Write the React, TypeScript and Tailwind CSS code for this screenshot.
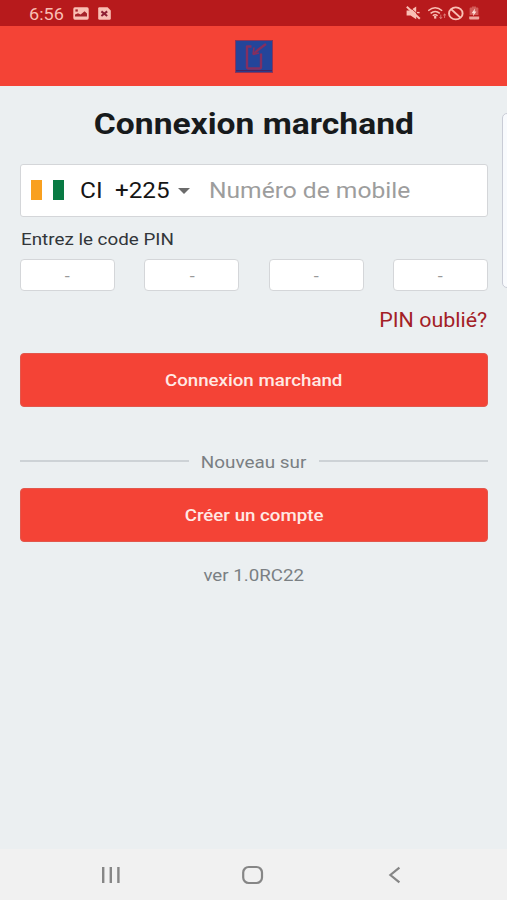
import type { ReactNode } from 'react';

function StatusBar() {
  return (
    <div className="flex h-[26px] items-center bg-[#b71a1c] pl-[29px] pr-[27px] text-[#f9bfb4]">
      <span className="mt-[3px] w-[44px] whitespace-nowrap text-[16px] leading-none">
        <span className="inline-block origin-left scale-x-[1.13]">6:56</span>
      </span>
      <svg className="mt-px h-[13px] w-[16px]" viewBox="0 0 16 13">
        <rect x="0.3" y="0.3" width="15.4" height="12.4" rx="1.6" fill="currentColor" />
        <path d="M2 9.4V7.4l3-1.2 2.6 1.4L11.6 4.2l2.4 2.4v2.8z" fill="#a5232a" />
        <path d="M2.4 2.4h2.4v2.2H2.4z" fill="#a5232a" />
      </svg>
      <svg className="ml-[9px] mt-px h-[13px] w-[13px]" viewBox="0 0 13 13">
        <path d="M1.4 0.2H9.6L12.8 3.4V11.4Q12.8 12.8 11.4 12.8H1.6Q0.2 12.8 0.2 11.4V1.4Q0.2 0.2 1.4 0.2z" fill="currentColor" />
        <path d="M3.4 4.4l5.8 4.6M9.2 4.4L3.4 9" stroke="#8d2034" strokeWidth="2" />
      </svg>
      <div className="ml-auto flex items-center">
        <svg className="mr-[2px] h-[14px] w-[15px]" viewBox="0 0 15 14">
          <path d="M0.6 4.6h3.6L10.2 0.6v12.6L4.6 9.6h-4z" fill="currentColor" />
          <path d="M11 6.6h2.6" stroke="currentColor" strokeWidth="1.4" />
          <path d="M2.2 -0.4L15 11.2" stroke="#b71a1c" strokeWidth="0.8" />
          <path d="M0.8 0.8L13.8 12.8" stroke="currentColor" strokeWidth="2" />
        </svg>
        <svg className="ml-[5px] h-[14px] w-[20px]" viewBox="0 0 20 14" fill="none" stroke="currentColor">
          <path d="M0.2 4.8Q7.2 -1.4 14.2 4.8" strokeWidth="1.5" />
          <path d="M2.6 7.4Q7.2 3.6 11.8 7.4" strokeWidth="1.5" />
          <path d="M4.8 9.8Q7.2 7.6 9.6 9.8" strokeWidth="1.5" />
          <path d="M7.2 10v2.6" strokeWidth="2.2" />
          <path d="M12.8 8.6v4M11.4 11l1.4 1.6 1.4-1.6M16.6 12V8M15.2 9.4L16.6 8 18 9.4" strokeWidth="0.9" opacity="0.6" />
        </svg>
        <svg className="h-[15px] w-[17px]" viewBox="0 0 17 15" fill="none" stroke="currentColor" strokeWidth="1.9">
          <ellipse cx="7.8" cy="7.4" rx="6.8" ry="6" />
          <path d="M3.2 3.2l9.2 8.4" />
        </svg>
        <svg className="ml-[4px] h-[14px] w-[11px]" viewBox="0 0 11 14">
          <path d="M3 0.4h4v1.2h1.4q1 0 1 1V9H0.6V2.6q0-1 1-1H3z" fill="currentColor" opacity="0.4" />
          <path d="M0.2 10.4h10v2.2q0 1-1 1h-8q-1 0-1-1z" fill="currentColor" opacity="0.85" />
          <path d="M6 2.4L2.6 7.2h2l-.8 3.4 3.6-5H5.6z" fill="#ffe0d9" />
        </svg>
      </div>
    </div>
  );
}

function Header() {
  return (
    <header className="flex h-[59.5px] items-start justify-center bg-[#f44336] pl-px pt-[14px]">
      <svg className="h-[33px] w-[38px]" viewBox="0 0 38 33">
        <rect x="0.5" y="0.5" width="37" height="32" fill="#24459a" stroke="#8a3358" />
        <path d="M1 30.6h36" stroke="#44245f" strokeWidth="1.4" />
        <g fill="none" stroke="#842f60" strokeWidth="2.4" strokeLinejoin="round">
          <path d="M16.5 6.5h-4.5v20.5q0 1.5 1.5 1.5h11q1.5 0 1.5-1.5V13.5" />
          <path d="M18.5 14l5-4.5 7.5-5.5" />
          <path d="M18 14.5l1-7M18 14.5l6-1.5" strokeWidth="1.6" />
        </g>
      </svg>
    </header>
  );
}

function PhoneInput() {
  return (
    <div className="flex h-[53px] items-center rounded-[3px] border border-[#d4d6d9] bg-white pl-[9.5px]">
      <div className="-mt-[2px] flex h-[20px] w-[33.5px] justify-between">
        <span className="w-[11.5px] bg-[#f9a01f]" />
        <span className="w-[11.5px] bg-[#087a43]" />
      </div>
      <span className="ml-[16px] mt-px w-[34.5px] whitespace-nowrap text-[22px] leading-none text-[#151515]">
        <span className="inline-block origin-left scale-x-[1.11]">CI</span>
      </span>
      <span className="mt-px w-[63.5px] whitespace-nowrap text-[22px] leading-none text-[#151515]">
        <span className="inline-block origin-left scale-x-[1.1]">+225</span>
      </span>
      <span className="h-0 w-0 border-x-[6px] border-t-[6px] border-x-transparent border-t-[#6b6b6b]" />
      <span className="ml-[19px] mt-px whitespace-nowrap text-[22px] leading-none text-[#9d9d9d]">
        <span className="inline-block origin-left scale-x-[1.117]">Numéro de mobile</span>
      </span>
    </div>
  );
}

function PinInput() {
  return (
    <div className="flex justify-between">
      {[0, 1, 2, 3].map((i) => (
        <div
          key={i}
          className="flex h-[32px] w-[95px] items-center justify-center rounded-[4px] border border-[#d4d6d9] bg-white pt-[3px] text-[16px] text-[#999]"
        >
          <span className="inline-block scale-x-[1.13]">-</span>
        </div>
      ))}
    </div>
  );
}

function Button({ children }: { children: ReactNode }) {
  return (
    <button className="flex h-[54px] w-full items-center justify-center rounded-[4px] border border-[#e2574c] bg-[#f44336] pt-[2px] text-[17px] font-medium text-[#ffe9e4]">
      <span className="inline-block scale-x-[1.1]">{children}</span>
    </button>
  );
}

function NavBar() {
  return (
    <nav className="flex h-[51px] items-center bg-[#f1f1f1] text-[#868686]">
      <svg className="ml-[101px] h-[18px] w-[20px]" viewBox="0 0 20 18" stroke="currentColor" strokeWidth="2.4">
        <path d="M2.2 1v16M9.8 1v16M17.4 1v16" />
      </svg>
      <svg className="ml-[120px] h-[20px] w-[23px]" viewBox="0 0 23 20" fill="none" stroke="currentColor" strokeWidth="2.2">
        <rect x="2.2" y="2" width="18.8" height="16" rx="5.5" />
      </svg>
      <svg className="ml-[124px] h-[18px] w-[13px]" viewBox="0 0 13 18" fill="none" stroke="currentColor" strokeWidth="2.2">
        <path d="M11.4 1.6L2.4 9l9 7.4" />
      </svg>
    </nav>
  );
}

export default function App() {
  return (
    <div className="relative flex h-[900px] w-[507px] flex-col overflow-hidden bg-[#ebeff1] font-['Roboto',sans-serif]">
      <StatusBar />
      <Header />
      <main className="flex flex-1 flex-col pl-[20px] pr-[19px]">
        <h1 className="mt-[20.5px] h-[36px] text-center text-[30px] font-bold leading-[36px] text-[#171a1c]">
          <span className="inline-block scale-x-[1.12] whitespace-nowrap">Connexion marchand</span>
        </h1>
        <div className="mt-[22px]">
          <PhoneInput />
        </div>
        <label className="mt-[13px] h-[20px] pl-[0.5px] text-[16.5px] leading-[20px] text-[#32363a]">
          <span className="inline-block origin-left scale-x-[1.14]">Entrez le code PIN</span>
        </label>
        <div className="mt-[9px]">
          <PinInput />
        </div>
        <a className="mt-[18px] h-[24px] pr-[0.5px] text-right text-[19.5px] leading-[24px] text-[#a32026]">
          <span className="inline-block origin-right scale-x-[1.1]">PIN oublié?</span>
        </a>
        <div className="mt-[20px]">
          <Button>Connexion marchand</Button>
        </div>
        <div className="mt-[44px] flex h-[20px] items-center text-[17px] leading-[20px] text-[#7a7f83]">
          <span className="h-[1.5px] flex-1 bg-[#cdd2d6]" />
          <span className="w-[130px] pt-[2px] text-center">
            <span className="inline-block scale-x-[1.11]">Nouveau sur</span>
          </span>
          <span className="h-[1.5px] flex-1 bg-[#cdd2d6]" />
        </div>
        <div className="mt-[17px]">
          <Button>Créer un compte</Button>
        </div>
        <p className="mt-[23px] h-[20px] text-center text-[17px] leading-[20px] text-[#7a7f83]">
          <span className="inline-block scale-x-[1.1]">ver 1.0RC22</span>
        </p>
      </main>
      <NavBar />
      {/* edge panel handle */}
      <div className="absolute -right-[6px] top-[113px] h-[175px] w-[11px] rounded-[5px] border border-[#c9ccd6] bg-[#f8fafd]" />
    </div>
  );
}
